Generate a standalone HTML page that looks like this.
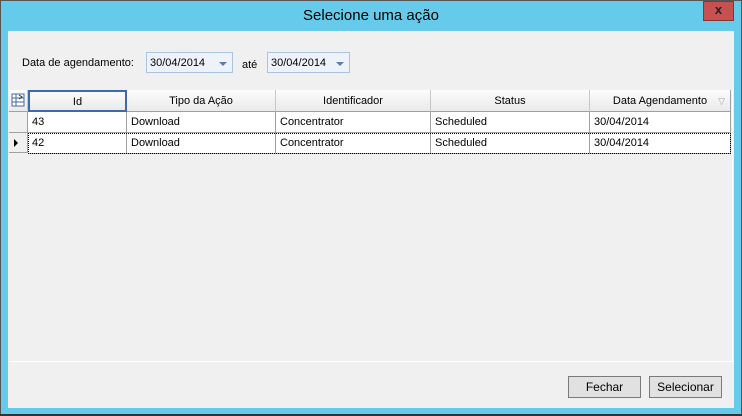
<!DOCTYPE html>
<html><head><style>
*{margin:0;padding:0;box-sizing:border-box}
body{width:742px;height:416px;background:#66cbea;font-family:"Liberation Sans",sans-serif;font-size:11px;color:#000;position:relative;overflow:hidden}
.abs{position:absolute}
.title{left:0;top:7px;width:742px;text-align:center;font-size:15px;color:#000}
.close{left:703px;top:1px;width:31px;height:20px;background:#c75050;border:1px solid #8a3333;color:#222;font-weight:bold;font-size:13px;text-align:center;line-height:16px}
.client{left:8px;top:31px;width:726px;height:377px;background:#f0f0f0}
.dp{height:21px;border:1px solid #a9c4e0;background:#eef3fb;padding-left:3px;line-height:20px;font-size:11px}
.dp .ar{position:absolute;right:5px;top:9px;width:0;height:0;border-left:4px solid transparent;border-right:4px solid transparent;border-top:4px solid #5a7fa8}
.grid{left:1px;top:59px;width:724px;height:272px;background:#f0f0f0;border-right:1px solid #fff;border-bottom:1px solid #fff}
.hc{position:absolute;top:0;height:22px;background:linear-gradient(#fcfcfc,#eaeaea);border-right:1px solid #c8c8c8;border-bottom:1px solid #a0a0a0;text-align:center;line-height:23px}
.c{position:absolute;height:21px;background:#fff;border-right:1px solid #a0a0a0;border-bottom:1px solid #a0a0a0;padding-left:4px;line-height:20px}
.btn{top:345px;height:22px;width:73px;border:1px solid #7a7a7a;background:#e1e1e1;text-align:center;line-height:21px;font-size:12px}
</style></head><body>
<div class="abs" style="left:0;top:0;width:742px;height:1px;background:#555"></div>
<div class="abs" style="left:0;top:0;width:1px;height:416px;background:#555"></div>
<div class="abs" style="right:0;top:0;width:1px;height:416px;background:#555"></div>
<div class="abs" style="left:0;bottom:0;width:742px;height:2px;background:#333"></div>
<div class="abs title">Selecione uma ação</div>
<div class="abs close">x</div>
<div class="abs client">
 <div class="abs" style="left:14px;top:26px">Data de agendamento:</div>
 <div class="abs dp" style="left:138px;top:21px;width:87px">30/04/2014<span class="ar"></span></div>
 <div class="abs" style="left:234px;top:28px">até</div>
 <div class="abs dp" style="left:259px;top:21px;width:83px">30/04/2014<span class="ar"></span></div>
 <div class="abs grid">
  <div class="hc" style="left:0;width:19px"><svg width="14" height="14" style="margin-top:3px" viewBox="0 0 14 14"><rect x="1" y="1" width="12" height="12" fill="#fff" stroke="#4a6a9a"/><path d="M1 5H13M1 9H13M5 1V13" stroke="#4a6a9a"/><path d="M8 2l3 2-3 2" stroke="#234" fill="none"/></svg></div>
  <div class="hc" style="left:19px;width:99px;border:2px solid #3a6ab0;line-height:20px">Id</div>
  <div class="hc" style="left:118px;width:149px">Tipo da Ação</div>
  <div class="hc" style="left:267px;width:155px">Identificador</div>
  <div class="hc" style="left:422px;width:159px">Status</div>
  <div class="hc" style="left:581px;width:141px;border-right:1px solid #a0a0a0">Data Agendamento<span style="position:absolute;right:5px;color:#aaa;font-size:9px">▽</span></div>
  <div class="abs" style="left:0;top:22px;width:19px;height:41px;background:#f0f0f0;border-right:1px solid #a0a0a0;border-bottom:1px solid #a0a0a0"></div>
  <div class="abs" style="left:0;top:42px;width:19px;height:1px;background:#a0a0a0"></div>
  <div class="abs" style="left:5px;top:49px;width:0;height:0;border-top:4px solid transparent;border-bottom:4px solid transparent;border-left:4px solid #000"></div>
  <div class="c" style="left:19px;top:22px;width:99px">43</div>
  <div class="c" style="left:118px;top:22px;width:149px">Download</div>
  <div class="c" style="left:267px;top:22px;width:155px">Concentrator</div>
  <div class="c" style="left:422px;top:22px;width:159px">Scheduled</div>
  <div class="c" style="left:581px;top:22px;width:141px">30/04/2014</div>
  <div class="c" style="left:19px;top:43px;width:99px">42</div>
  <div class="c" style="left:118px;top:43px;width:149px">Download</div>
  <div class="c" style="left:267px;top:43px;width:155px">Concentrator</div>
  <div class="c" style="left:422px;top:43px;width:159px">Scheduled</div>
  <div class="c" style="left:581px;top:43px;width:141px">30/04/2014</div>
  <div class="abs" style="left:19px;top:43px;width:703px;height:21px;border:1px dotted #000"></div>
 </div>
 <div class="abs btn" style="left:560px">Fechar</div>
 <div class="abs btn" style="left:641px">Selecionar</div>
</div>
</body></html>
